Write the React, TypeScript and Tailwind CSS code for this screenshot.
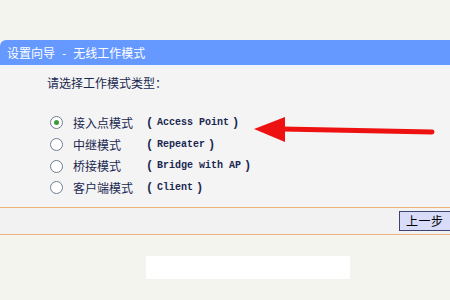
import type { ReactNode } from 'react';

const modes = [
  { label: '接入点模式', en: 'Access Point', checked: true },
  { label: '中继模式', en: 'Repeater', checked: false },
  { label: '桥接模式', en: 'Bridge with AP', checked: false },
  { label: '客户端模式', en: 'Client', checked: false },
];

function Radio({ checked }: { checked: boolean }) {
  return (
    <span className="w-[13px] h-[13px] rounded-full border border-[#6f7f93] bg-white flex items-center justify-center shrink-0">
      {checked && <span className="w-[5px] h-[5px] rounded-full bg-[#3f9a3a]" />}
    </span>
  );
}

function Row({ children }: { children: ReactNode }) {
  return <div className="h-[21.7px] flex items-center">{children}</div>;
}

export default function App() {
  return (
    <div className="w-[450px] h-[300px] overflow-hidden bg-[#f4f4ee] flex flex-col font-['Noto_Sans_CJK_SC',sans-serif] text-[12px]">
      <div className="h-[40px] shrink-0" />
      <div className="h-[25px] shrink-0 bg-[#6699ff] rounded-tl-[6px] text-white flex items-center pl-[7px] leading-none">
        <span>设置向导</span>
        <span className="mx-[7px]">-</span>
        <span>无线工作模式</span>
      </div>
      <div className="h-[3px] shrink-0 bg-[#eef4f8]" />
      <div className="h-[139px] shrink-0 bg-[#f4f4f4] relative pt-[8px] text-[#1a2850]">
        <p className="pl-[47px] leading-[13px]">请选择工作模式类型：</p>
        <div className="mt-[23px] pl-[50px]">
          {modes.map((m) => (
            <Row key={m.label}>
              <Radio checked={m.checked} />
              <span className="ml-[10px] w-[73px] shrink-0 leading-none">{m.label}</span>
              <span className="leading-none flex items-center whitespace-pre font-['Liberation_Mono',monospace] font-bold">
                <span className="text-[12px] w-[11px]">(</span>
                <span className="text-[10px]">{m.en}</span>
                <span className="text-[12px] ml-[3px]">)</span>
              </span>
            </Row>
          ))}
        </div>
        <svg className="absolute left-[250px] top-[42px]" width="190" height="36" viewBox="0 0 190 36">
          <line x1="32" y1="19" x2="182" y2="22" stroke="#ee1111" strokeWidth="5" strokeLinecap="round" />
          <polygon points="4,19 35,7 35,32" fill="#ee1111" />
        </svg>
      </div>
      <div className="h-[28px] shrink-0 border-y border-[#efb27a] bg-[#f2f2f2] flex items-center pl-[399px]">
        <button className="w-[60px] h-[20px] shrink-0 bg-[#d8dcf8] border border-[#3e4470] text-black text-[12px] leading-none pl-[6px] text-left tracking-[0.5px]">
          上一步
        </button>
      </div>
      <div className="flex-1 pt-[21px] pl-[146px]">
        <div className="w-[204px] h-[23px] bg-white" />
      </div>
    </div>
  );
}
